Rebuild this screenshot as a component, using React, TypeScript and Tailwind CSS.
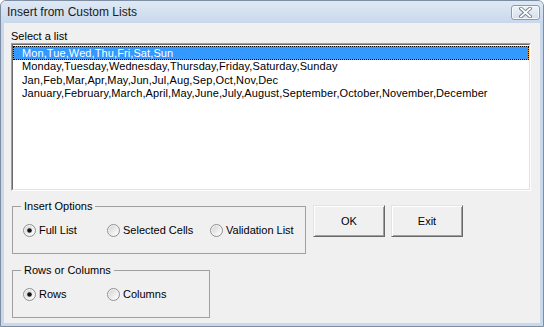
import React from 'react';

function Radio({ checked }: { checked?: boolean }) {
  return (
    <svg width="13" height="13" viewBox="0 0 13 13" className="shrink-0">
      <defs>
        <linearGradient id="rg" x1="0" y1="0" x2="1" y2="1">
          <stop offset="0" stopColor="#d4d4d4" />
          <stop offset="1" stopColor="#ffffff" />
        </linearGradient>
      </defs>
      <circle cx="6.5" cy="6.5" r="6" fill="#f4f4f4" stroke="#8e8f8f" strokeWidth="1" />
      <circle cx="6.5" cy="6.5" r="4.5" fill="url(#rg)" />
      {checked && <circle cx="6.5" cy="6.5" r="2.3" fill="#141414" />}
    </svg>
  );
}

function RadioItem({ label, checked, width }: { label: string; checked?: boolean; width: string }) {
  return (
    <div className={`flex items-center gap-[3px] shrink-0 ${width}`}>
      <Radio checked={checked} />
      <span className="leading-[13px] whitespace-nowrap">{label}</span>
    </div>
  );
}

function Button({ label }: { label: string }) {
  return (
    <button className="w-[72px] h-[32px] bg-[#f0f0f0] border border-t-[#e3e3e3] border-l-[#e3e3e3] border-r-[#696969] border-b-[#696969] shadow-[inset_1px_1px_0_#ffffff,inset_-1px_-1px_0_#a0a0a0] text-black">
      {label}
    </button>
  );
}

export default function App() {
  const lists = [
    'Mon,Tue,Wed,Thu,Fri,Sat,Sun',
    'Monday,Tuesday,Wednesday,Thursday,Friday,Saturday,Sunday',
    'Jan,Feb,Mar,Apr,May,Jun,Jul,Aug,Sep,Oct,Nov,Dec',
    'January,February,March,April,May,June,July,August,September,October,November,December',
  ];

  return (
    <div className="w-[544px] h-[327px] flex flex-col bg-[#c9d8ea] border border-[#7d8ea3] rounded-t-[6px] overflow-hidden font-['Tahoma','Liberation_Sans',sans-serif] text-[11px] text-black">
      {/* Title bar */}
      <div className="h-[22px] flex items-center justify-between pl-[6px] pr-[3px] bg-gradient-to-b from-[#dfe9f5] to-[#c8d8eb]">
        <span className="font-['Segoe_UI','Liberation_Sans',sans-serif] text-[12px] text-[#1a1a1a]">Insert from Custom Lists</span>
        <div className="w-[29px] h-[15px] mt-[1px] flex items-center justify-center rounded-[3px] border border-[#8a9ab0] bg-gradient-to-b from-[#eef3f9] to-[#d3dfed] shadow-[inset_0_0_0_1px_#f6f9fc]">
          <svg width="13" height="11" viewBox="0 0 13 11">
            <path d="M2 1.5 L11 9.5 M11 1.5 L2 9.5" stroke="#6f7a87" strokeWidth="3.6" strokeLinecap="square" />
            <path d="M2 1.5 L11 9.5 M11 1.5 L2 9.5" stroke="#ffffff" strokeWidth="1.8" strokeLinecap="square" />
          </svg>
        </div>
      </div>

      {/* Client area */}
      <div className="flex-1 mx-[3px] mb-[3px] bg-[#f0f0f0] pl-[7px] pr-[9px] pt-[7px]">
        <div className="h-[13px] leading-[13px]">Select a list</div>

        {/* List box */}
        <div className="h-[148px] border border-t-[#a0a0a0] border-l-[#a0a0a0] border-r-[#ffffff] border-b-[#ffffff]">
          <div className="h-full border border-t-[#696969] border-l-[#696969] border-r-[#e3e3e3] border-b-[#e3e3e3] bg-white pt-[1px] tracking-[0.1px]">
            {lists.map((item, i) =>
              i === 0 ? (
                <div key={i} className="bg-[#e8902a]">
                  <div className="h-[14px] leading-[12px] pl-[8px] bg-[#3399ff] bg-clip-padding text-white border border-dotted border-black">
                    {item}
                  </div>
                </div>
              ) : (
                <div key={i} className="h-[13.5px] leading-[13.5px] pl-[9px] whitespace-nowrap">
                  {item}
                </div>
              )
            )}
          </div>
        </div>

        {/* Options and buttons */}
        <div className="flex gap-[7px] mt-[9px] ml-[1px]">
          <div className="flex flex-col gap-[10px]">
            <fieldset className="w-[294px] border border-[#a0a0a0] p-0 m-0 min-w-0">
              <legend className="ml-[8px] px-[3px] h-[12px] leading-[12px]">Insert Options</legend>
              <div className="flex h-[13px] mt-[12px] mb-[16px] pl-[10px]">
                <RadioItem label="Full List" checked width="w-[84px]" />
                <RadioItem label="Selected Cells" width="w-[103px]" />
                <RadioItem label="Validation List" width="w-auto" />
              </div>
            </fieldset>
            <fieldset className="w-[198px] border border-[#a0a0a0] p-0 m-0 min-w-0">
              <legend className="ml-[8px] px-[3px] h-[12px] leading-[12px]">Rows or Columns</legend>
              <div className="flex h-[13px] mt-[12px] mb-[16px] pl-[10px]">
                <RadioItem label="Rows" checked width="w-[84px]" />
                <RadioItem label="Columns" width="w-auto" />
              </div>
            </fieldset>
          </div>
          <div className="flex gap-[6px] mt-[5px] items-start">
            <Button label="OK" />
            <Button label="Exit" />
          </div>
        </div>
      </div>
    </div>
  );
}
